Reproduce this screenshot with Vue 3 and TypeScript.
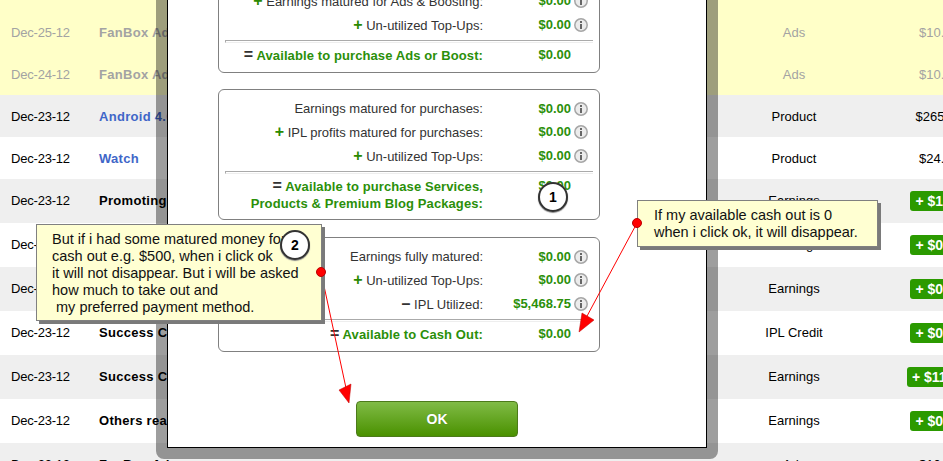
<template>
  <div class="page">
    <div class="table">
      <div class="row-cut"></div>
      <div
        v-for="(row, i) in rows"
        :key="i"
        class="row"
        :class="{ pending: row.pending }"
      >
        <span class="date">{{ row.date }}</span>
        <span class="title" :class="{ link: row.link }">{{ row.title }}</span>
        <span class="type">{{ row.type }}</span>
        <span class="amount">
          <b v-if="row.credit" class="badge">+ {{ row.amount }}</b>
          <template v-else>{{ row.amount }}</template>
        </span>
      </div>
    </div>

    <div class="modal">
      <div class="modal-inner">
        <section v-for="(box, b) in boxes" :key="b" class="box">
          <div class="lines">
            <div v-for="line in box.lines" :key="line.label" class="line">
              <span class="label">
                <b v-if="line.sign" class="sign" :class="{ minus: line.sign !== '+' }">{{ line.sign }}</b>
                {{ line.label }}
              </span>
              <span class="money">{{ line.value }}</span>
              <svg class="info" viewBox="0 0 14 14" width="14" height="14">
                <circle cx="7" cy="7" r="6.2" fill="#ececec" stroke="#a6a6a6" stroke-width="1.5" />
                <rect x="6" y="3" width="2" height="2" fill="#666" />
                <rect x="6" y="6" width="2" height="5" fill="#666" />
              </svg>
            </div>
          </div>
          <div class="divider"></div>
          <div class="total">
            <span class="label total-label"><b class="sign minus">=</b> <span v-html="box.total"></span></span>
            <span class="money total-money">$0.00</span>
          </div>
        </section>
        <button class="ok" type="button">OK</button>
      </div>
    </div>

    <svg class="arrows" width="943" height="461" viewBox="0 0 943 461">
      <line x1="637" y1="223" x2="586" y2="318" stroke="#f00" />
      <polygon points="579,332 582,313 594,320" fill="#f00" stroke="#b00" stroke-width="0.5" />
      <line x1="321" y1="272" x2="346" y2="388" stroke="#f00" />
      <polygon points="349,403 339,390 351,384" fill="#f00" stroke="#b00" stroke-width="0.5" />
    </svg>

    <div class="note note-left">
      But if i had some matured money for<br />
      cash out e.g. $500, when i click ok<br />
      it will not disappear. But i will be asked<br />
      how much to take out and<br />
      &nbsp;my preferred payment method.
    </div>
    <div class="note note-right">
      If my available cash out is 0<br />
      when i click ok, it will disappear.
    </div>

    <div class="step step-one">1</div>
    <div class="step step-two">2</div>
    <span class="dot dot-left"></span>
    <span class="dot dot-right"></span>
  </div>
</template>

<script setup lang="ts">
interface Row {
  date: string
  title: string
  type: string
  amount: string
  pending?: boolean
  link?: boolean
  credit?: boolean
}

interface Line {
  sign?: string
  label: string
  value: string
}

interface Box {
  lines: Line[]
  total: string
}

const rows: Row[] = [
  { date: 'Dec-25-12', title: 'FanBox Ads', type: 'Ads', amount: '$10.00', pending: true },
  { date: 'Dec-24-12', title: 'FanBox Ads', type: 'Ads', amount: '$10.00', pending: true },
  { date: 'Dec-23-12', title: 'Android 4.0 Tablet', type: 'Product', amount: '$265.00', link: true },
  { date: 'Dec-23-12', title: 'Watch', type: 'Product', amount: '$24.00', link: true },
  { date: 'Dec-23-12', title: 'Promoting Ads', type: 'Earnings', amount: '$1.00', credit: true },
  { date: 'Dec-23-12', title: 'Success Commission', type: 'Earnings', amount: '$0.50', credit: true },
  { date: 'Dec-23-12', title: 'Success Commission', type: 'Earnings', amount: '$0.50', credit: true },
  { date: 'Dec-23-12', title: 'Success Commission', type: 'IPL Credit', amount: '$0.50', credit: true },
  { date: 'Dec-23-12', title: 'Success Commission', type: 'Earnings', amount: '$11.00', credit: true },
  { date: 'Dec-23-12', title: 'Others read your post', type: 'Earnings', amount: '$0.50', credit: true },
  { date: 'Dec-23-12', title: 'FanBox Ads', type: 'Ads', amount: '$10.00' }
]

const boxes: Box[] = [
  {
    lines: [
      { sign: '+', label: 'Earnings matured for Ads & Boosting:', value: '$0.00' },
      { sign: '+', label: 'Un-utilized Top-Ups:', value: '$0.00' }
    ],
    total: 'Available to purchase Ads or Boost:'
  },
  {
    lines: [
      { label: 'Earnings matured for purchases:', value: '$0.00' },
      { sign: '+', label: 'IPL profits matured for purchases:', value: '$0.00' },
      { sign: '+', label: 'Un-utilized Top-Ups:', value: '$0.00' }
    ],
    total: 'Available to purchase Services,<br>Products &amp; Premium Blog Packages:'
  },
  {
    lines: [
      { label: 'Earnings fully matured:', value: '$0.00' },
      { sign: '+', label: 'Un-utilized Top-Ups:', value: '$0.00' },
      { sign: '–', label: 'IPL Utilized:', value: '$5,468.75' }
    ],
    total: 'Available to Cash Out:'
  }
]
</script>

<style>
html,
body {
  margin: 0;
  overflow: hidden;
  background: #fff;
}
</style>

<style scoped>
.page {
  position: relative;
  width: 943px;
  height: 461px;
  overflow: hidden;
  font-family: "Liberation Sans", Arial, sans-serif;
  font-size: 13px;
  color: #000;
}

/* table runs past the right edge of the window, like the scrolled page */
.table {
  width: 1014px;
}

.row-cut {
  height: 11px;
  background: #ffffc8;
}

.row {
  display: grid;
  grid-template-columns: 99px 625px 140px 150px;
  align-items: start;
  padding: 13px 0 11px;
  line-height: 18px;
}

.row:nth-child(odd) {
  background: #fff;
}

.row:nth-child(even) {
  background: #efefef;
}

.row.pending {
  background: #ffffc8;
  color: #a3a3a3;
}

.date {
  padding-left: 11px;
  letter-spacing: -0.2px;
}

.title {
  font-weight: bold;
  letter-spacing: 0.3px;
  white-space: nowrap;
}

.title.link {
  color: #3f66c8;
}

.type,
.amount {
  text-align: center;
}

.badge {
  display: inline-block;
  margin: -1px 0 1px;
  padding: 0 5px;
  line-height: 20px;
  font-size: 14px;
  color: #fff;
  background: #2b9a00;
  border-radius: 3px;
  vertical-align: top;
}

.modal {
  position: absolute;
  left: 156px;
  bottom: 2px;
  width: 562px;
  box-sizing: border-box;
  border: 11px solid rgba(0, 0, 0, 0.38);
  border-radius: 0 0 8px 8px;
  background-clip: padding-box;
}

.modal-inner {
  display: flex;
  flex-direction: column;
  gap: 16px;
  padding: 0 0 10px 50px;
  border: 1px solid #000;
  background: #fff;
}

.box {
  box-sizing: border-box;
  width: 382px;
  padding: 7px 0;
  border: 1px solid #808080;
  border-radius: 6px;
  color: #333;
}

.box:last-of-type {
  margin-top: 1px;
}

.line {
  display: flex;
  align-items: center;
  height: 23px;
}

.line:last-child {
  height: 25px;
}

.label {
  width: 264px;
  text-align: right;
  flex: none;
  white-space: nowrap;
}

.sign {
  color: #2a8a00;
  font-weight: bold;
  font-size: 16px;
  line-height: 1;
}

.sign.minus {
  color: #333;
}

.money {
  flex: none;
  width: 88px;
  text-align: right;
  font-weight: bold;
  color: #2b8f0a;
}

.info {
  flex: none;
  margin-left: 3px;
}

.divider {
  box-sizing: border-box;
  height: 3px;
  margin: 3px 6px 4px;
  border-top: 1px solid #aaa;
  border-bottom: 1px solid #eee;
  border-left: 1px solid #aaa;
}

.total {
  display: flex;
  align-items: flex-start;
  min-height: 18px;
  line-height: 17px;
}

.total-label {
  font-weight: bold;
  letter-spacing: 0.1px;
  color: #2b8f0a;
}

.total-money {
  margin-top: -1px;
}

.ok {
  align-self: center;
  width: 162px;
  height: 36px;
  margin: 33px 0 0 -50px;
  border: 1px solid #4c7a1a;
  border-radius: 4px;
  background: linear-gradient(#80bb46, #4a9100);
  color: #fff;
  font: bold 14px "Liberation Sans", Arial, sans-serif;
  text-shadow: 0 0 1px rgba(0, 0, 0, 0.25);
}

.arrows {
  position: absolute;
  left: 0;
  top: 0;
}

.note {
  position: absolute;
  box-sizing: border-box;
  background: #ffffd2;
  border: 1px solid #808080;
  box-shadow: 3px 3px 0 #7a7a7a;
  font-size: 14.5px;
  line-height: 17px;
  color: #111;
  white-space: nowrap;
  overflow: hidden;
}

.note-left {
  left: 36px;
  top: 224px;
  width: 286px;
  height: 97px;
  padding: 6px 0 0 15px;
}

.note-right {
  left: 637px;
  top: 200px;
  width: 241px;
  height: 47px;
  padding: 6px 0 0 16px;
}

.step {
  position: absolute;
  box-sizing: border-box;
  width: 30px;
  height: 30px;
  border: 2px solid #333;
  border-radius: 50%;
  background: #fff;
  box-shadow: 0 1px 1px #888;
  text-align: center;
  font-size: 14px;
  font-weight: bold;
  line-height: 26px;
}

.step-one {
  left: 538px;
  top: 182px;
}

.step-two {
  left: 280px;
  top: 230px;
}

.dot {
  position: absolute;
  box-sizing: border-box;
  width: 10px;
  height: 10px;
  border: 1px solid #b00;
  border-radius: 50%;
  background: #f00;
}

.dot-left {
  left: 316px;
  top: 267px;
}

.dot-right {
  left: 632px;
  top: 218px;
}
</style>
